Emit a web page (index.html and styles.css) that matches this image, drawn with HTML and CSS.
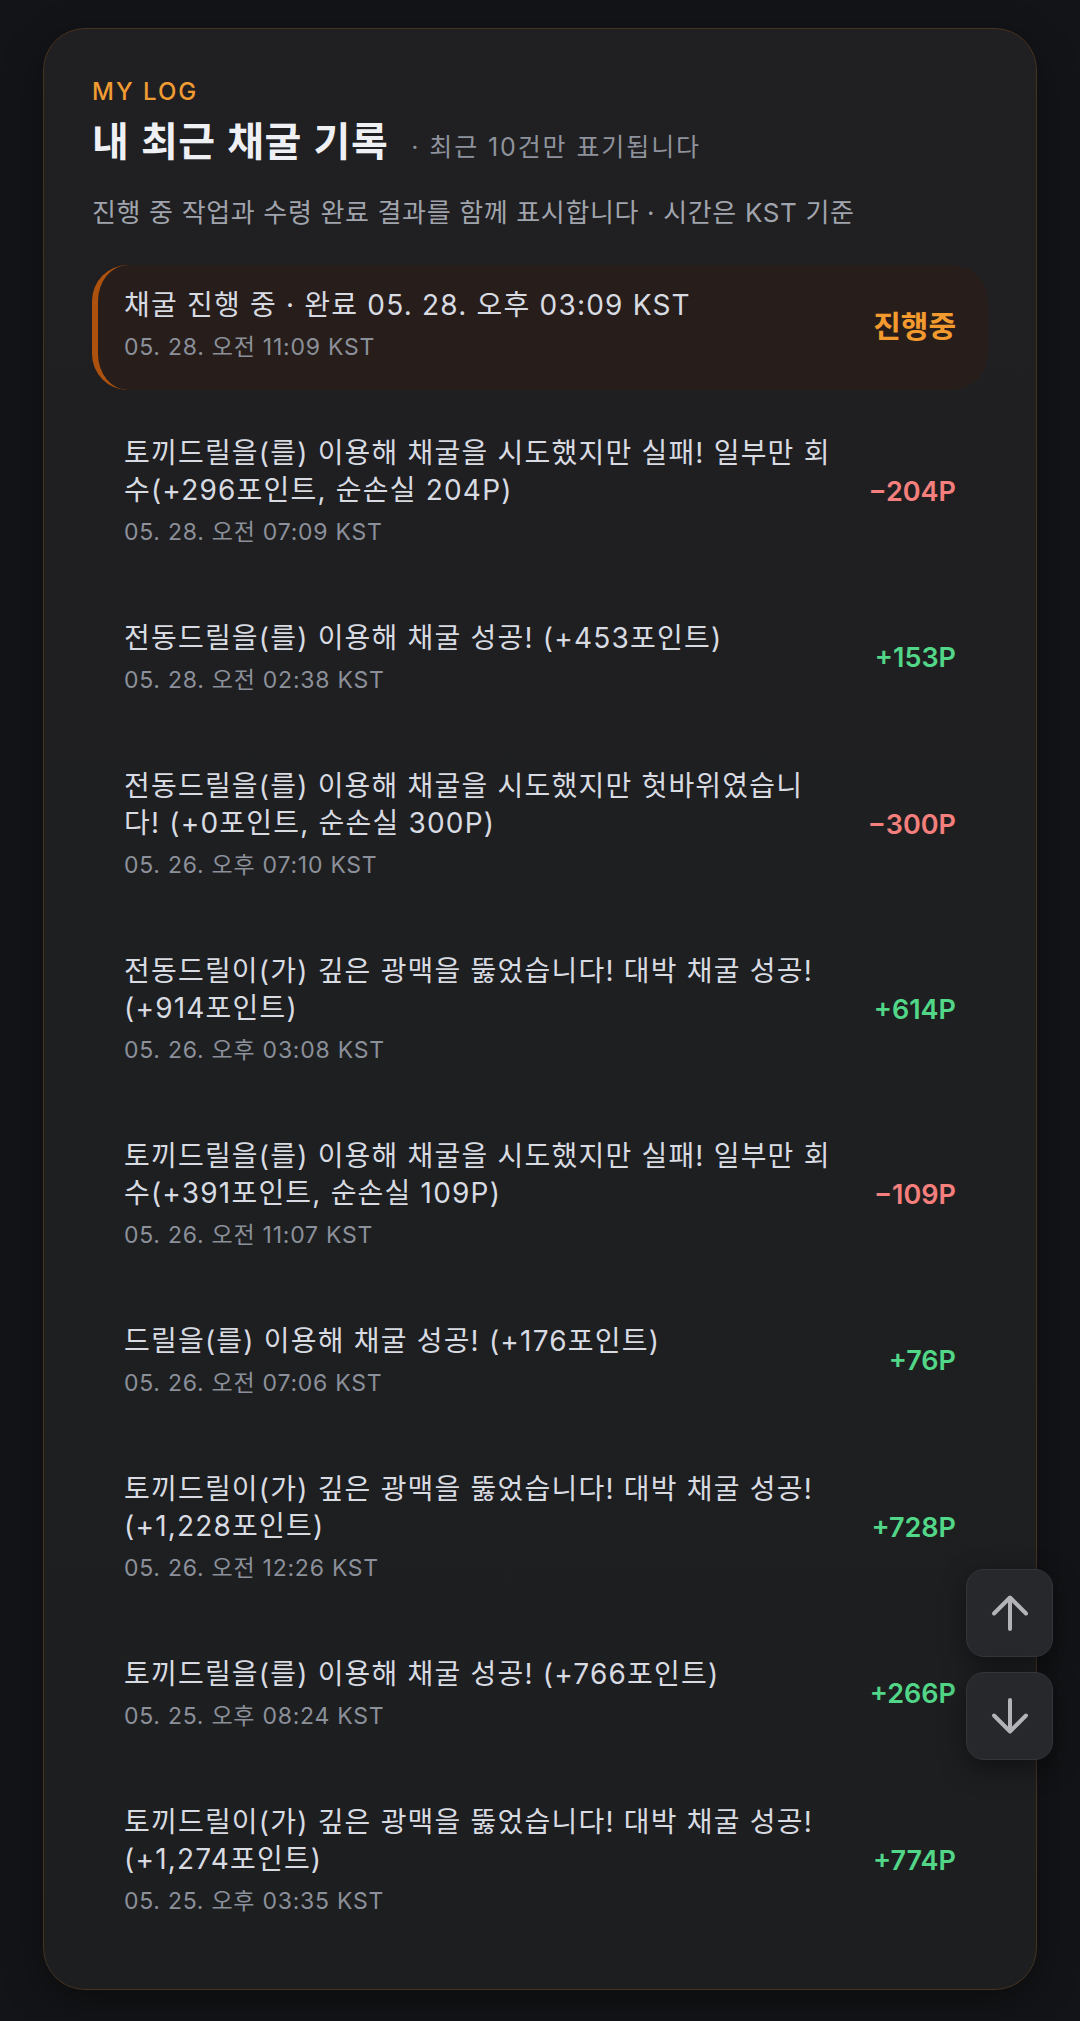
FILE: index.html
```html
<!DOCTYPE html>
<html lang="ko">
<head>
<meta charset="utf-8">
<meta name="viewport" content="width=device-width, initial-scale=1">
<title>MY LOG</title>
<link rel="stylesheet" href="styles.css">
</head>
<body>
<main class="page">
  <section class="card">
    <div class="eyebrow">MY LOG</div>
    <div class="heading">
      <h1 class="title">내 최근 채굴 기록</h1>
      <span class="subtitle">· 최근 10건만 표기됩니다</span>
    </div>
    <p class="desc">진행 중 작업과 수령 완료 결과를 함께 표시합니다 · 시간은 KST 기준</p>

    <ul class="log-list">
      <li class="log-item is-active">
        <div class="log-body">
          <div class="log-title">채굴 진행 중 · 완료 05. 28. 오후 03:09 KST</div>
          <div class="log-time">05. 28. 오전 11:09 KST</div>
        </div>
        <div class="log-amount pending">진행중</div>
      </li>
      <li class="log-item">
        <div class="log-body">
          <div class="log-title">토끼드릴을(를) 이용해 채굴을 시도했지만 실패! 일부만 회수(+296포인트, 순손실 204P)</div>
          <div class="log-time">05. 28. 오전 07:09 KST</div>
        </div>
        <div class="log-amount minus">−204P</div>
      </li>
      <li class="log-item">
        <div class="log-body">
          <div class="log-title">전동드릴을(를) 이용해 채굴 성공! (+453포인트)</div>
          <div class="log-time">05. 28. 오전 02:38 KST</div>
        </div>
        <div class="log-amount plus">+153P</div>
      </li>
      <li class="log-item">
        <div class="log-body">
          <div class="log-title">전동드릴을(를) 이용해 채굴을 시도했지만 헛바위였습니다! (+0포인트, 순손실 300P)</div>
          <div class="log-time">05. 26. 오후 07:10 KST</div>
        </div>
        <div class="log-amount minus">−300P</div>
      </li>
      <li class="log-item">
        <div class="log-body">
          <div class="log-title">전동드릴이(가) 깊은 광맥을 뚫었습니다! 대박 채굴 성공! (+914포인트)</div>
          <div class="log-time">05. 26. 오후 03:08 KST</div>
        </div>
        <div class="log-amount plus">+614P</div>
      </li>
      <li class="log-item">
        <div class="log-body">
          <div class="log-title">토끼드릴을(를) 이용해 채굴을 시도했지만 실패! 일부만 회수(+391포인트, 순손실 109P)</div>
          <div class="log-time">05. 26. 오전 11:07 KST</div>
        </div>
        <div class="log-amount minus">−109P</div>
      </li>
      <li class="log-item">
        <div class="log-body">
          <div class="log-title">드릴을(를) 이용해 채굴 성공! (+176포인트)</div>
          <div class="log-time">05. 26. 오전 07:06 KST</div>
        </div>
        <div class="log-amount plus">+76P</div>
      </li>
      <li class="log-item">
        <div class="log-body">
          <div class="log-title">토끼드릴이(가) 깊은 광맥을 뚫었습니다! 대박 채굴 성공! (+1,228포인트)</div>
          <div class="log-time">05. 26. 오전 12:26 KST</div>
        </div>
        <div class="log-amount plus">+728P</div>
      </li>
      <li class="log-item">
        <div class="log-body">
          <div class="log-title">토끼드릴을(를) 이용해 채굴 성공! (+766포인트)</div>
          <div class="log-time">05. 25. 오후 08:24 KST</div>
        </div>
        <div class="log-amount plus">+266P</div>
      </li>
      <li class="log-item">
        <div class="log-body">
          <div class="log-title">토끼드릴이(가) 깊은 광맥을 뚫었습니다! 대박 채굴 성공! (+1,274포인트)</div>
          <div class="log-time">05. 25. 오후 03:35 KST</div>
        </div>
        <div class="log-amount plus">+774P</div>
      </li>
    </ul>
  </section>
</main>

<nav class="scroll-nav" aria-label="스크롤">
  <button class="nav-btn" type="button" aria-label="맨 위로">
    <svg viewBox="0 0 40 40" width="40" height="40" aria-hidden="true"><path d="M20 36V5M4 20.5L20 4.5L36 20.5"/></svg>
  </button>
  <button class="nav-btn" type="button" aria-label="맨 아래로">
    <svg viewBox="0 0 40 40" width="40" height="40" aria-hidden="true"><path d="M20 4V35M4 19.5L20 35.5L36 19.5"/></svg>
  </button>
</nav>
</body>
</html>
```

FILE: styles.css
```css
* { box-sizing: border-box; }

html, body {
  margin: 0;
  padding: 0;
  background: #131417;
}

body {
  font-family: Inter, "Noto Sans CJK KR", "Noto Sans", sans-serif;
  color: #d9dce3;
}

.page {
  padding: 28px 43px 30px;
}

.card {
  background: linear-gradient(180deg, #201f21 0%, #1e1f21 50%, #1d1e20 100%);
  border: 1px solid #45321f;
  border-radius: 42px;
  padding: 48px 48px 45px;
  box-shadow: 0 12px 40px rgba(0, 0, 0, 0.35);
}

.eyebrow {
  font-size: 24px;
  line-height: 30px;
  font-weight: 500;
  letter-spacing: 2px;
  color: #f19c33;
}

.heading {
  display: flex;
  align-items: baseline;
  gap: 23px;
  margin-top: 8px;
}

.title {
  margin: 0;
  font-family: "Noto Sans CJK KR", sans-serif;
  font-size: 40px;
  line-height: 48px;
  font-weight: 700;
  letter-spacing: 0.5px;
  color: #eef0f4;
}

.subtitle {
  font-size: 25px;
  line-height: 32px;
  letter-spacing: 1.9px;
  color: #8e929c;
}

.desc {
  margin: 32px 0 0;
  font-size: 26px;
  line-height: 36px;
  letter-spacing: 0.65px;
  color: #a0a4ad;
}

.log-list {
  list-style: none;
  margin: 34px 0 0;
  padding: 0;
  display: flex;
  flex-direction: column;
  gap: 23px;
}

.log-item {
  display: flex;
  align-items: center;
  gap: 22px;
  padding: 22px 32px 28px;
  border-radius: 36px;
}

.log-item.is-active {
  background: #271e1b;
  border-left: 6px solid #ad520e;
  padding-left: 26px;
}

.log-body {
  flex: 1;
  min-width: 0;
}

.log-title {
  font-size: 28px;
  line-height: 37px;
  letter-spacing: 1.2px;
  color: #d8dbe2;
}

.log-time {
  margin-top: 8px;
  font-size: 23px;
  line-height: 30px;
  letter-spacing: 0.75px;
  color: #8b909a;
}

.log-amount {
  flex: none;
  min-width: 100px;
  font-size: 27px;
  line-height: 37px;
  font-weight: 600;
  text-align: right;
}

.log-amount.pending {
  font-family: "Noto Sans CJK KR", sans-serif;
  font-size: 30px;
  font-weight: 700;
  color: #f39a2e;
}

.log-amount.minus { color: #f47f7c; }
.log-amount.plus { color: #52d688; }

.scroll-nav {
  position: fixed;
  right: 27px;
  bottom: 261px;
  display: flex;
  flex-direction: column;
  gap: 15px;
}

.nav-btn {
  width: 87px;
  height: 88px;
  padding: 0;
  display: flex;
  align-items: center;
  justify-content: center;
  background: #27282c;
  border: 1px solid #34353a;
  border-radius: 18px;
  box-shadow: 0 8px 28px rgba(0, 0, 0, 0.45);
  cursor: pointer;
}

.nav-btn svg {
  display: block;
  fill: none;
  stroke: #b4b4b8;
  stroke-width: 4;
  stroke-linecap: round;
  stroke-linejoin: round;
}
```
